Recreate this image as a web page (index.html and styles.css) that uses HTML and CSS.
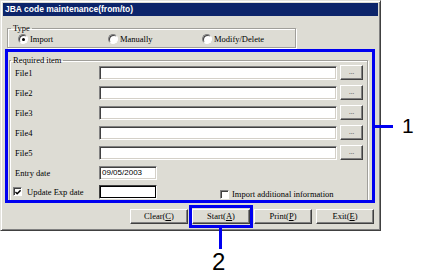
FILE: index.html
```html
<!DOCTYPE html>
<html lang="en">
<head>
  <meta charset="UTF-8">
  <link rel="stylesheet" href="styles.css">
  <title>JBA code maintenance(from/to)</title>
</head>
<body>
  <div class="win">
    <div class="title">JBA code maintenance(from/to)</div>
    <div class="content">

      <fieldset class="group type">
        <legend>Type</legend>
        <div class="radios">
          <span class="opt first"><span class="radio on"></span>Import</span>
          <span class="opt second"><span class="radio"></span>Manually</span>
          <span class="opt"><span class="radio"></span>Modify/Delete</span>
        </div>
      </fieldset>

      <fieldset class="group req">
        <legend>Required item</legend>
        <div class="row"><span class="lbl">File1</span><span class="field wide"></span><span class="btn dots">...</span></div>
        <div class="row"><span class="lbl">File2</span><span class="field wide"></span><span class="btn dots">...</span></div>
        <div class="row"><span class="lbl">File3</span><span class="field wide"></span><span class="btn dots">...</span></div>
        <div class="row"><span class="lbl">File4</span><span class="field wide"></span><span class="btn dots">...</span></div>
        <div class="row"><span class="lbl">File5</span><span class="field wide"></span><span class="btn dots">...</span></div>
        <div class="row date"><span class="lbl">Entry date</span><span class="field short">09/05/2003</span></div>
        <div class="row upd">
          <span class="lbl"><span class="check on"><svg width="7" height="7" viewBox="0 0 7 7"><path d="M0.5 3 L2.5 5 L6.5 1" fill="none" stroke="#000" stroke-width="1.6"/></svg></span>Update Exp date</span>
          <span class="field short focus"></span>
          <span class="extra"><span class="check"></span>Import additional information</span>
        </div>
      </fieldset>

      <div class="actions">
        <span class="btn act">Clear(<u>C</u>)</span>
        <span class="btn act">Start(<u>A</u>)</span>
        <span class="btn act">Print(<u>P</u>)</span>
        <span class="btn act">Exit(<u>E</u>)</span>
      </div>

    </div>
  </div>

  <!-- callouts drawn over the dialog -->
  <div class="mark box1"></div>
  <div class="mark lead1"></div>
  <div class="num n1">1</div>
  <div class="mark box2"></div>
  <div class="mark lead2"></div>
  <div class="num n2">2</div>
</body>
</html>
```

FILE: styles.css
```css
body {
  margin: 0;
  background: #fff;
  font-family: "Liberation Serif", "DejaVu Serif", serif;
  font-size: 8.5px;
  color: #000;
}

.win {
  width: 381px;
  height: 231px;
  box-sizing: border-box;
  background: #dddcd4;
  border: 1px solid;
  border-color: #e4e3de #404040 #404040 #e4e3de;
  box-shadow: inset 1px 1px #fff, inset -1px -1px #808080;
  padding: 2px;
}

.title {
  height: 13px;
  line-height: 13px;
  background: #0c246a;
  color: #fff;
  font-family: "Liberation Sans", Arial, sans-serif;
  font-weight: bold;
  font-size: 8.5px;
  padding-left: 2px;
}

.content {
  padding: 7px 4px 0 4px;
}

/* group boxes */
.group {
  margin: 0;
  padding: 0;
  min-width: 0;
  border: 1px solid #a09f9a;
  box-shadow: inset 1px 1px #fff, 1px 1px #fff;
}

.group legend {
  padding: 0 2px;
  line-height: 11px;
}

.type {
  width: 289px;
  box-sizing: border-box;
  padding-bottom: 3px;
}

.type legend {
  margin-left: 3px;
}

.radios {
  display: flex;
  height: 10px;
  align-items: center;
}

.opt {
  display: flex;
  align-items: center;
  gap: 2px;
  line-height: 10px;
}

.opt.first {
  margin-left: 10px;
  width: 90px;
}

.opt.second {
  width: 94px;
}

.radio {
  width: 8px;
  height: 8px;
  border-radius: 50%;
  background: #fff;
  border: 1px solid;
  border-color: #808080 #fff #fff #808080;
  box-shadow: inset 1px 1px #404040;
  position: relative;
}

.radio.on::after {
  content: "";
  position: absolute;
  left: 3px;
  top: 3px;
  width: 3px;
  height: 3px;
  border-radius: 50%;
  background: #000;
}

.req {
  margin: 7px 0 0 2px;
  width: 359px;
  box-sizing: border-box;
  padding-bottom: 1px;
}

.req legend {
  margin-left: 1px;
  line-height: 10px;
}

.row {
  display: flex;
  align-items: center;
  height: 15px;
  margin-bottom: 5px;
  padding-left: 5px;
}

.row.date {
  margin-bottom: 4px;
}

.row.upd {
  padding-left: 3px;
  margin-bottom: 0;
}

.lbl {
  width: 84px;
  display: flex;
  align-items: center;
  gap: 5px;
}

.upd .lbl {
  width: 86px;
}

/* sunken edit boxes */
.field {
  display: block;
  box-sizing: border-box;
  height: 14px;
  background: #fff;
  border: 1px solid;
  border-color: #808080 #fff #fff #808080;
  box-shadow: inset 1px 1px #404040, inset -1px -1px #d4d0c8;
  font-family: "Liberation Sans", Arial, sans-serif;
  font-size: 8px;
  line-height: 12px;
  padding-left: 2px;
}

.wide {
  width: 238px;
}

.short {
  width: 58px;
}

.field.focus {
  border-color: #404040 #fff #fff #404040;
  box-shadow: inset 1px 1px #000, inset -1px -1px #000;
}

.check {
  width: 9px;
  height: 9px;
  box-sizing: border-box;
  background: #fff;
  border: 1px solid;
  border-color: #808080 #fff #fff #808080;
  box-shadow: inset 1px 1px #404040;
  display: flex;
  align-items: center;
  justify-content: center;
}

.check svg {
  margin: 1px 0 0 1px;
}

.extra {
  display: flex;
  align-items: center;
  gap: 3px;
  margin: 5px 0 0 63px;
}

/* raised buttons */
.btn {
  box-sizing: border-box;
  height: 15px;
  background: #dddcd4;
  border: 1px solid;
  border-color: #fff #404040 #404040 #fff;
  box-shadow: inset -1px -1px #808080;
  display: flex;
  align-items: center;
  justify-content: center;
  line-height: 13px;
}

.dots {
  width: 23px;
  margin-left: 3px;
  font-size: 7px;
  color: #444;
}

.actions {
  display: flex;
  justify-content: flex-end;
  gap: 4px;
  margin-top: 8px;
}

.act {
  width: 58px;
}

/* annotation overlay */
.mark {
  position: absolute;
  box-sizing: border-box;
}

.box1 {
  left: 5px;
  top: 49px;
  width: 370px;
  height: 154px;
  border: 3px solid #0000f0;
}

.lead1 {
  left: 375px;
  top: 125px;
  width: 18px;
  height: 3px;
  background: #0000f0;
}

.box2 {
  left: 189px;
  top: 205px;
  width: 64px;
  height: 23px;
  border: 3px solid #0000f0;
}

.lead2 {
  left: 219px;
  top: 228px;
  width: 3px;
  height: 21px;
  background: #0000f0;
}

.num {
  position: absolute;
  font-family: "Liberation Sans", Arial, sans-serif;
  line-height: 1;
  color: #000;
}

.n1 {
  left: 402px;
  top: 115px;
  font-size: 21px;
}

.n2 {
  left: 212px;
  top: 250px;
  font-size: 24px;
}
```
